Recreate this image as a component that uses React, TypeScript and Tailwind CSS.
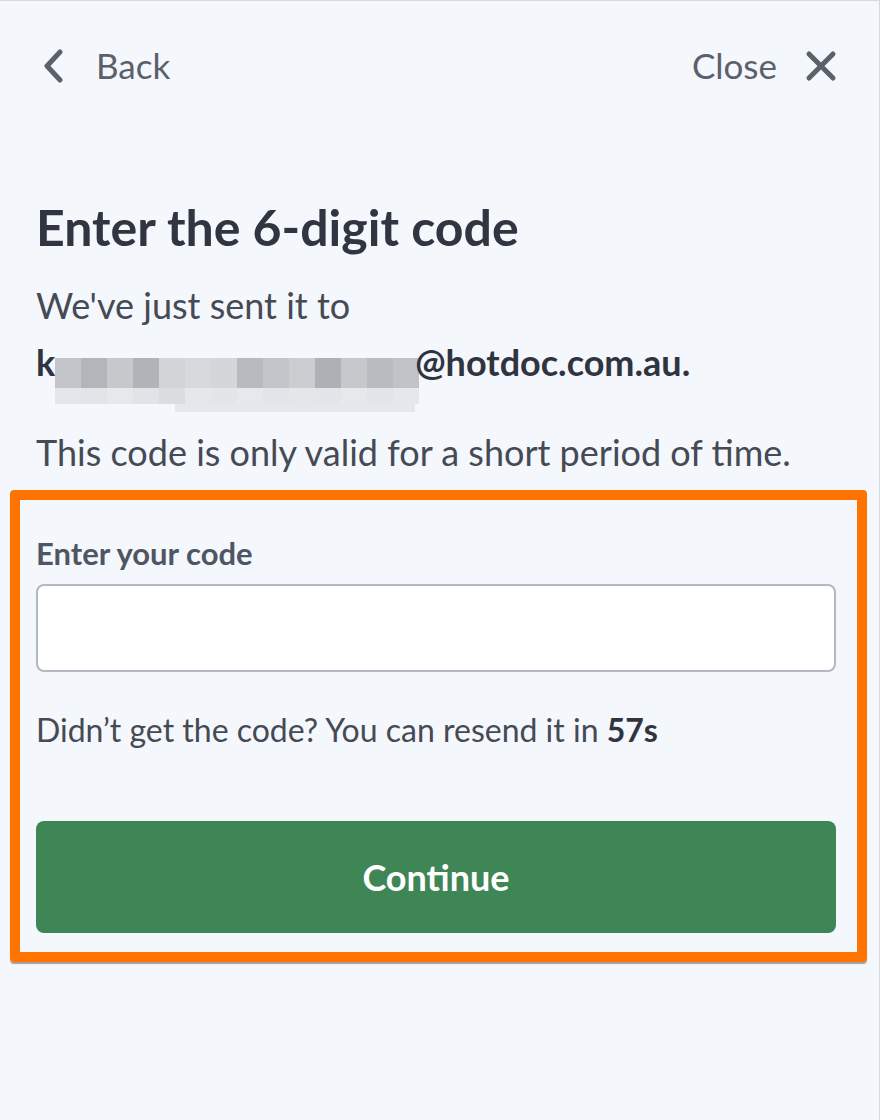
import React from "react";

const redactTop = [
  "#c3c5ca", "#b3b5ba", "#c6c8cc", "#b1b3b8", "#d2d4d8", "#d7d9dd", "#d4d6da",
  "#b8bac0", "#c3c5ca", "#cbcdd1", "#aeb0b5", "#c6c8cc", "#b9bbc1", "#c1c3c8",
];
const redactMid = [
  "#e4e6ea", "#e2e4e8", "#e6e8ec", "#e1e3e7", "#dadce0", "#e5e7eb", "#e3e5e9",
  "#e6e8ec", "#e2e4e8", "#e4e6ea", "#e3e5e9", "#e6e8ec", "#e2e4e8", "#e5e7eb",
];

function Redaction() {
  return (
    <span className="inline-flex h-[54px] w-[360px] flex-col align-[-12px]">
      <span className="flex h-[30px]">
        {redactTop.map((c, i) => (
          <span key={i} className="h-full w-[26px] shrink-0" style={{ background: c }} />
        ))}
      </span>
      <span className="flex h-[16px]">
        {redactMid.map((c, i) => (
          <span key={i} className="h-full w-[26px] shrink-0" style={{ background: c }} />
        ))}
      </span>
      <span className="ml-[120px] h-[8px] w-[240px] bg-[#e5e7eb]" />
    </span>
  );
}

export default function App() {
  return (
    <div
      className="h-[1120px] w-[880px] overflow-hidden border-t border-r border-[#d6d9de] bg-[#f4f7fc] text-[#454a55]"
      style={{ fontFamily: "Lato, 'Noto Sans', sans-serif" }}
    >
      {/* header */}
      <div className="flex h-[129px] items-center justify-between pl-[44px] pr-[42px] text-[35px] text-[#5b606b]">
        <div className="flex items-center gap-[32px]">
          <svg width="20" height="34" viewBox="0 0 20 34" fill="none" stroke="currentColor" strokeWidth="5" strokeLinecap="round" strokeLinejoin="round">
            <path d="M16 3 L3 17 L16 31" />
          </svg>
          <span>Back</span>
        </div>
        <div className="flex items-center gap-[28px]">
          <span>Close</span>
          <svg width="32" height="32" viewBox="0 0 32 32" fill="none" stroke="currentColor" strokeWidth="5" strokeLinecap="round">
            <path d="M4 4 L28 28 M28 4 L4 28" />
          </svg>
        </div>
      </div>

      <div className="px-[36px] pt-[67px]">
        <h1 className="text-[50px] font-bold leading-[60px] text-[#313541]">Enter the 6-digit code</h1>
        <p className="mt-[20px] text-[36px] leading-[57px]">
          We've just sent it to
          <br />
          <span className="font-bold text-[#2f3440]">
            k<Redaction />@hotdoc.com.au.
          </span>
        </p>
        <p className="mt-[12px] text-[36px] leading-[57px]">This code is only valid for a short period of time.</p>
      </div>

      <div className="ml-[10px] mt-[9px] w-[857px] rounded-[4px] border-[10px] border-[#ff7300] pb-[19px] pl-[16px] pr-[21px] pt-[36px] shadow-[0_2px_1px_rgba(0,0,0,0.35)]">
        <label className="block text-[31px] font-bold leading-[34px] text-[#4f5663]">Enter your code</label>
        <input
          type="text"
          className="mt-[14px] block h-[88px] w-full rounded-[8px] border-2 border-[#b3b8c2] bg-white px-4 text-[30px] outline-none"
        />
        <p className="mt-[39px] text-[32px] leading-[38px]">
          Didn’t get the code? You can resend it in <span className="font-bold text-[#2f3440]">57s</span>
        </p>
        <button className="mt-[72px] flex h-[112px] w-full items-center justify-center rounded-[8px] bg-[#3f8656] text-[36px] font-bold text-white">
          Continue
        </button>
      </div>
    </div>
  );
}
